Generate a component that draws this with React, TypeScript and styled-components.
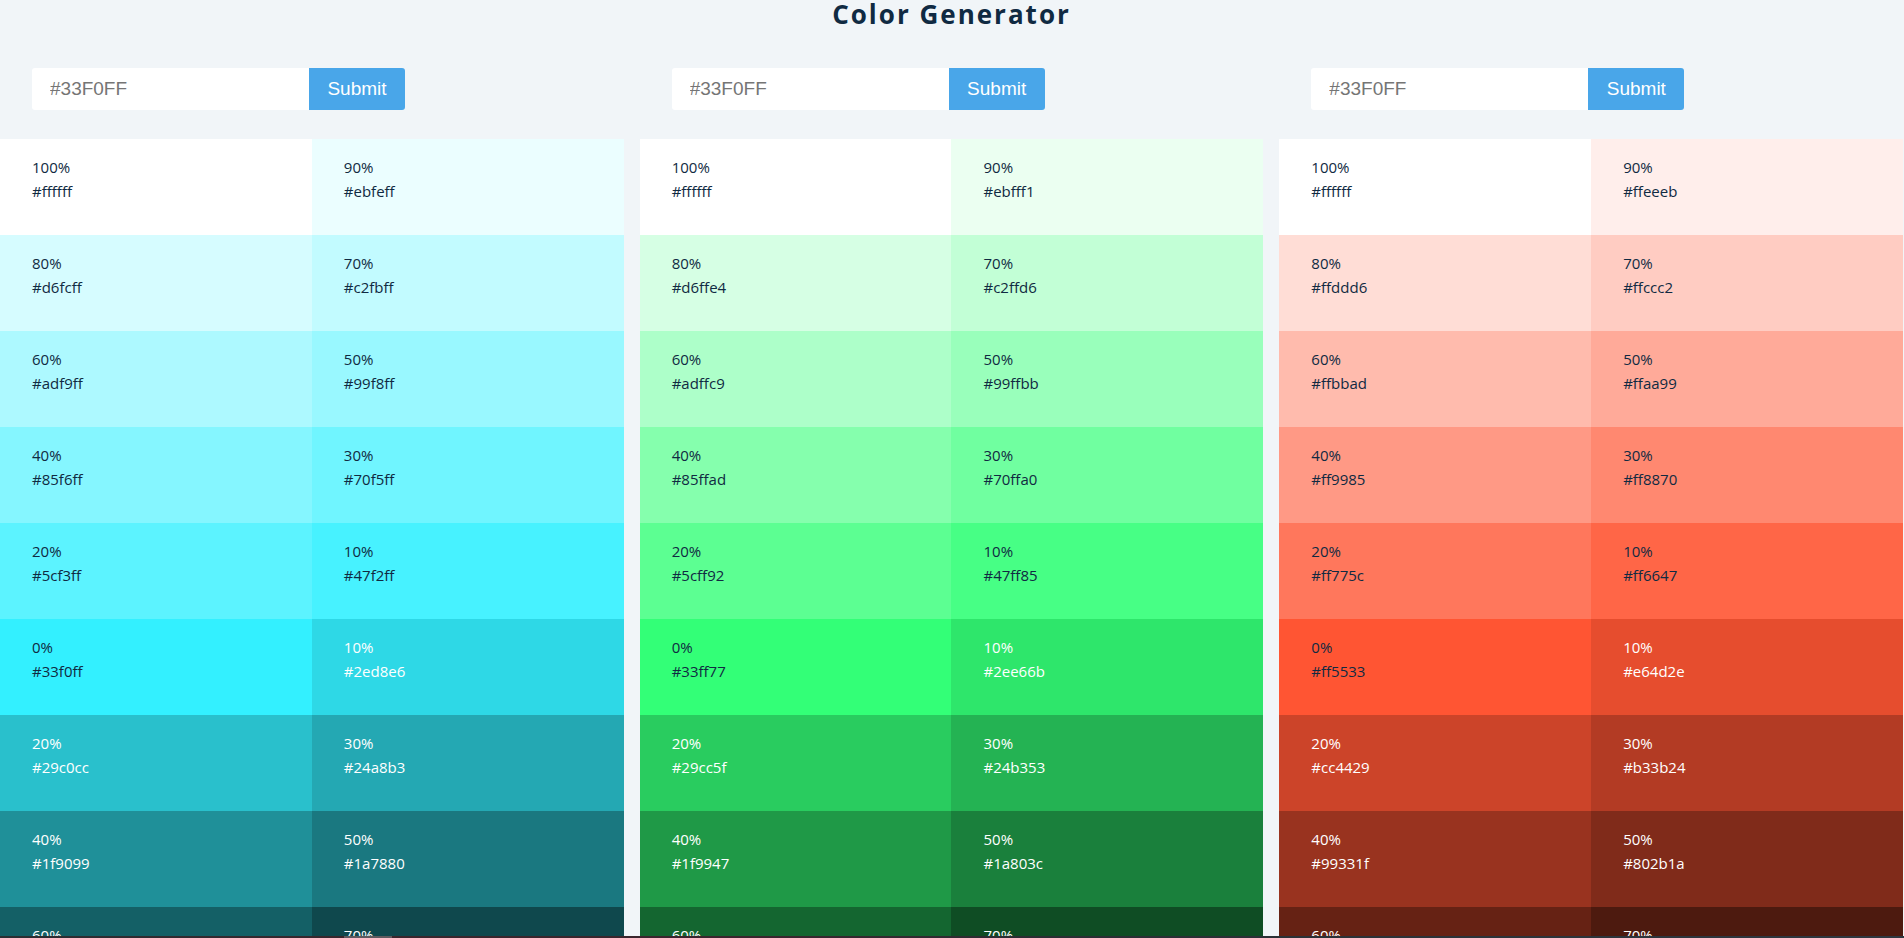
import React, { useState } from "react";
import styled, { createGlobalStyle } from "styled-components";

const GlobalStyle = createGlobalStyle`
  *, *::before, *::after { box-sizing: border-box; margin: 0; padding: 0; }
  body {
    background: #f1f5f8;
    color: #102a42;
    font-family: "Segoe UI", "Open Sans", "Noto Sans", sans-serif;
    font-size: 15px;
    line-height: 24px;
  }
`;

const Screen = styled.div`
  height: 100vh;
  display: flex;
  flex-direction: column;
`;

const Content = styled.main`
  flex: 1;
  min-height: 0;
  overflow-y: auto;
  scrollbar-width: none;
  padding-right: 1px;
`;

const Title = styled.h1`
  font-size: 26px;
  line-height: 28px;
  letter-spacing: 2px;
  text-align: center;
`;

const Generators = styled.div`
  display: grid;
  grid-template-columns: repeat(3, 1fr);
  gap: 16px;
  padding-top: 40px;
`;

const Form = styled.form`
  display: flex;
  padding: 0 32px;
  margin-bottom: 29px;
`;

const HexInput = styled.input`
  width: 277px;
  height: 42px;
  padding: 0 18px;
  border: 0;
  border-radius: 3px 0 0 3px;
  background: #fff;
  font: 19px "Liberation Sans", Arial, sans-serif;
`;

const SubmitButton = styled.button`
  width: 96px;
  height: 42px;
  border: 0;
  border-radius: 0 3px 3px 0;
  background: #49a6e9;
  color: #fff;
  font: 19px "Liberation Sans", Arial, sans-serif;
  cursor: pointer;
`;

const Swatches = styled.section`
  display: grid;
  grid-template-columns: repeat(2, 1fr);
  grid-auto-rows: 96px;
`;

const Swatch = styled.article<{ $color: string; $light: boolean }>`
  padding: 16px 32px;
  background: ${(p) => p.$color};
  color: ${(p) => (p.$light ? "#fff" : "#102a42")};
`;

const BottomEdge = styled.div`
  height: 2px;
  background:
    linear-gradient(#5f5a5f, #5f5a5f) 344px 0 / 48px 2px no-repeat,
    linear-gradient(90deg, #2a2f33, #3a262d 20%, #3a262d 40%, #2a2f33 55%, #2e3740);
`;

type Shade = { percent: number; hex: string; dark: boolean };

const mix = (base: number[], target: number, weight: number) =>
  "#" +
  base
    .map((c) => {
      const value = target === 255 ? c + (255 - c) * weight : c * (1 - weight);
      return Math.round(value).toString(16).padStart(2, "0");
    })
    .join("");

const buildShades = (hex: string): Shade[] => {
  const base = [1, 3, 5].map((i) => parseInt(hex.slice(i, i + 2), 16));
  const tints = [100, 90, 80, 70, 60, 50, 40, 30, 20, 10, 0].map((percent) => ({
    percent,
    hex: mix(base, 255, percent / 100),
    dark: false,
  }));
  const darks = [10, 20, 30, 40, 50, 60, 70, 80, 90, 100].map((percent) => ({
    percent,
    hex: mix(base, 0, percent / 100),
    dark: true,
  }));
  return [...tints, ...darks];
};

function Generator({ initial }: { initial: string }) {
  const [value, setValue] = useState("");
  const [color, setColor] = useState(initial);

  const submit = (event: React.FormEvent) => {
    event.preventDefault();
    if (/^#[0-9a-f]{6}$/i.test(value)) setColor(value);
  };

  return (
    <div>
      <Form onSubmit={submit}>
        <HexInput
          type="text"
          aria-label="Hex color"
          placeholder="#33F0FF"
          value={value}
          onChange={(event) => setValue(event.target.value)}
        />
        <SubmitButton type="submit">Submit</SubmitButton>
      </Form>
      <Swatches>
        {buildShades(color).map((shade, index) => (
          <Swatch key={index} $color={shade.hex} $light={shade.dark}>
            <p>{shade.percent}%</p>
            <p>{shade.hex}</p>
          </Swatch>
        ))}
      </Swatches>
    </div>
  );
}

export default function App() {
  return (
    <Screen>
      <GlobalStyle />
      <Content>
        <Title>Color Generator</Title>
        <Generators>
          <Generator initial="#33f0ff" />
          <Generator initial="#33ff77" />
          <Generator initial="#ff5533" />
        </Generators>
      </Content>
      <BottomEdge />
    </Screen>
  );
}
